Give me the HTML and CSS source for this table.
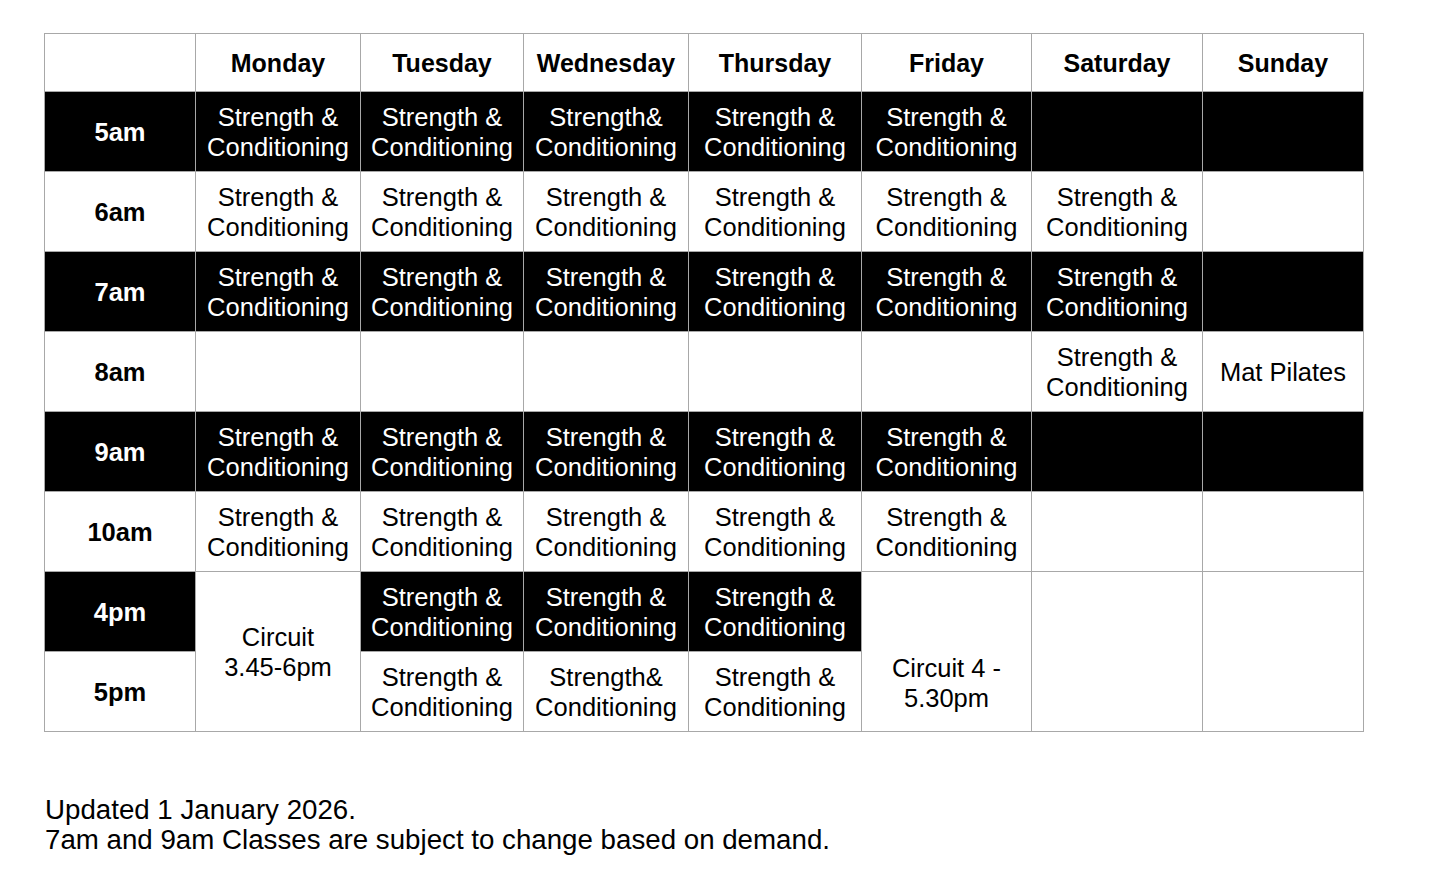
FILE: index.html
```html
<!DOCTYPE html>
<html lang="en">
<head>
<meta charset="utf-8">
<title>Timetable</title>
<link rel="stylesheet" href="styles.css">
</head>
<body>
<main class="page">
  <table class="timetable">
    <colgroup>
      <col class="c-time"><col class="c-mon"><col class="c-tue"><col class="c-wed"><col class="c-thu"><col class="c-fri"><col class="c-sat"><col class="c-sun">
    </colgroup>
    <thead>
      <tr class="head">
        <th></th><th>Monday</th><th>Tuesday</th><th>Wednesday</th><th>Thursday</th><th>Friday</th><th>Saturday</th><th>Sunday</th>
      </tr>
    </thead>
    <tbody>
      <tr class="dark">
        <th>5am</th>
        <td>Strength &amp;<br>Conditioning</td>
        <td>Strength &amp;<br>Conditioning</td>
        <td>Strength&amp;<br>Conditioning</td>
        <td>Strength &amp;<br>Conditioning</td>
        <td>Strength &amp;<br>Conditioning</td>
        <td></td><td></td>
      </tr>
      <tr>
        <th>6am</th>
        <td>Strength &amp;<br>Conditioning</td>
        <td>Strength &amp;<br>Conditioning</td>
        <td>Strength &amp;<br>Conditioning</td>
        <td>Strength &amp;<br>Conditioning</td>
        <td>Strength &amp;<br>Conditioning</td>
        <td>Strength &amp;<br>Conditioning</td>
        <td></td>
      </tr>
      <tr class="dark">
        <th>7am</th>
        <td>Strength &amp;<br>Conditioning</td>
        <td>Strength &amp;<br>Conditioning</td>
        <td>Strength &amp;<br>Conditioning</td>
        <td>Strength &amp;<br>Conditioning</td>
        <td>Strength &amp;<br>Conditioning</td>
        <td>Strength &amp;<br>Conditioning</td>
        <td></td>
      </tr>
      <tr>
        <th>8am</th>
        <td></td><td></td><td></td><td></td><td></td>
        <td>Strength &amp;<br>Conditioning</td>
        <td>Mat Pilates</td>
      </tr>
      <tr class="dark">
        <th>9am</th>
        <td>Strength &amp;<br>Conditioning</td>
        <td>Strength &amp;<br>Conditioning</td>
        <td>Strength &amp;<br>Conditioning</td>
        <td>Strength &amp;<br>Conditioning</td>
        <td>Strength &amp;<br>Conditioning</td>
        <td></td><td></td>
      </tr>
      <tr>
        <th>10am</th>
        <td>Strength &amp;<br>Conditioning</td>
        <td>Strength &amp;<br>Conditioning</td>
        <td>Strength &amp;<br>Conditioning</td>
        <td>Strength &amp;<br>Conditioning</td>
        <td>Strength &amp;<br>Conditioning</td>
        <td></td><td></td>
      </tr>
      <tr>
        <th class="inv">4pm</th>
        <td class="light" rowspan="2">Circuit<br>3.45-6pm</td>
        <td class="inv">Strength &amp;<br>Conditioning</td>
        <td class="inv">Strength &amp;<br>Conditioning</td>
        <td class="inv">Strength &amp;<br>Conditioning</td>
        <td class="light low" rowspan="2">Circuit 4 -<br>5.30pm</td>
        <td rowspan="2"></td>
        <td rowspan="2"></td>
      </tr>
      <tr>
        <th>5pm</th>
        <td>Strength &amp;<br>Conditioning</td>
        <td>Strength&amp;<br>Conditioning</td>
        <td>Strength &amp;<br>Conditioning</td>
      </tr>
    </tbody>
  </table>
  <p class="note">Updated 1 January 2026.<br>7am and 9am Classes are subject to change based on demand.</p>
</main>
</body>
</html>
```

FILE: styles.css
```css
html, body {
  margin: 0;
  padding: 0;
  background: #fff;
}

body {
  font-family: "Liberation Sans", Arial, Helvetica, sans-serif;
  color: #000;
}

.page {
  padding: 33px 0 0 44px;
}

.timetable {
  border-collapse: collapse;
  table-layout: fixed;
  width: 1320px;
  font-size: 25.5px;
  line-height: 30px;
}

.c-time { width: 151px; }
.c-mon { width: 165px; }
.c-tue { width: 163px; }
.c-wed { width: 165px; }
.c-thu { width: 173px; }
.c-fri { width: 170px; }
.c-sat { width: 171px; }
.c-sun { width: 161px; }

.timetable th,
.timetable td {
  border: 1px solid #a8a8a8;
  padding: 0;
  text-align: center;
  vertical-align: middle;
  white-space: nowrap;
  overflow: hidden;
}

.timetable th {
  font-weight: 700;
}

.timetable td {
  font-weight: 400;
}

.head th {
  height: 57px;
  font-size: 25px;
}

.timetable tbody tr {
  height: 80px;
}

.dark th,
.dark td,
.inv {
  background: #000;
  color: #fff;
}

.light {
  background: #fff;
  color: #000;
}

.low {
  padding-top: 62px !important;
}

.note {
  margin: 63px 0 0 1px;
  font-size: 27.7px;
  line-height: 30px;
}
```
